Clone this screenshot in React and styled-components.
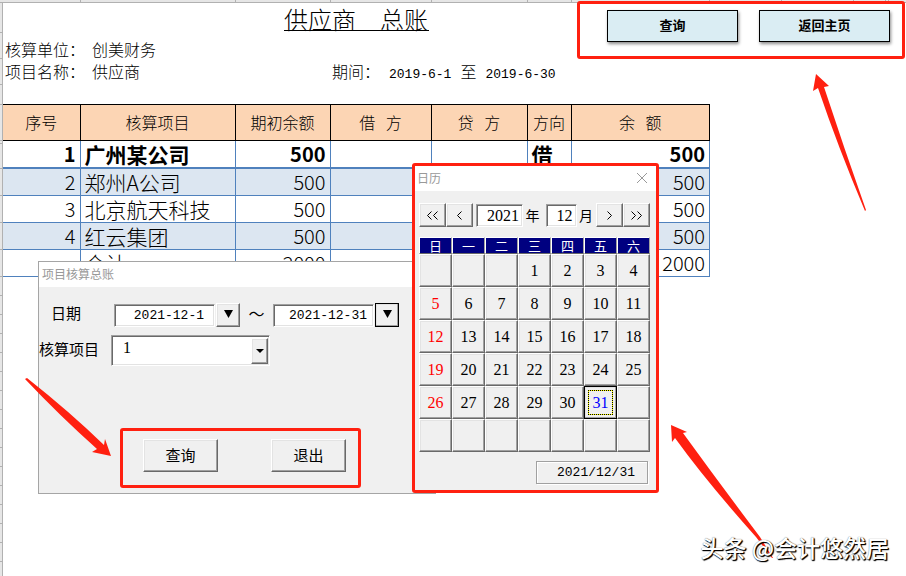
import React from "react";
import styled, { createGlobalStyle, css } from "styled-components";

const GlobalStyle = createGlobalStyle`
  * {
    box-sizing: border-box;
  }
  body {
    margin: 0;
    background: #fff;
    color: #000;
    font-family: "Noto Sans CJK SC", sans-serif;
    font-weight: 300;
  }
  button,
  input,
  select {
    margin: 0;
    color: inherit;
    font: inherit;
  }
`;

const RED = "#ff2010";
const DIGITS = `"Liberation Serif", "Noto Sans CJK SC", serif`;
const DATES = `"Liberation Mono", "Noto Sans CJK SC", monospace`;

const raised = css`
  border: 1px solid;
  border-color: #fff #696969 #696969 #fff;
  box-shadow: inset -1px -1px #a0a0a0, inset 1px 1px #e3e3e3;
  background: #f0f0f0;
`;

const sunken = css`
  border: 1px solid;
  border-color: #a0a0a0 #fff #fff #a0a0a0;
  box-shadow: inset 1px 1px #696969, inset -1px -1px #e3e3e3;
  background: #fff;
`;

const Page = styled.div`
  position: relative;
  display: grid;
  grid-template-columns: 3px minmax(0, 1fr);
  grid-template-rows: 3px auto;
  height: 100vh;
  overflow: hidden;
`;

const ColumnHeads = styled.div`
  grid-column: 1 / -1;
  display: flex;
  padding-left: 3px;
  background: #e6e6e6;
  border-bottom: 1px solid #b1b1b1;
`;

const ColumnHead = styled.span`
  width: ${({ $size }) => $size}px;
  border-right: 1px solid #b1b1b1;
`;

const RowHeads = styled.div`
  background: #e6e6e6;
  border-right: 1px solid #b1b1b1;
`;

const RowHead = styled.div`
  height: ${({ $size }) => $size}px;
  border-bottom: 1px solid #b1b1b1;
`;

const Sheet = styled.main`
  min-width: 0;
`;

const Header = styled.header`
  display: grid;
  grid-template-columns: minmax(0, 1fr) 328px;
  align-items: start;
  padding-right: 1px;
  height: 101px;
`;

const Title = styled.h1`
  width: 145px;
  height: 28px;
  margin: 0 148px 7px auto;
  border-bottom: 1px solid #000;
  font-size: 24px;
  font-weight: 300;
  line-height: 32px;
  white-space: pre;
`;

const Meta = styled.div`
  display: flex;
  padding: 0 17px 0 2px;
  font-size: 16px;
  line-height: 22px;
  white-space: pre;
`;

const MetaLabel = styled.span`
  width: 87px;
`;

const Period = styled.span`
  display: flex;
  align-items: baseline;
  gap: 9px;
  width: 228px;
  margin-left: auto;
`;

const PeriodLabel = styled.span`
  width: 48px;
`;

const PeriodDate = styled.time`
  font-family: ${DATES};
  font-size: 13px;
`;

const Frame = styled.div`
  display: flex;
  border: 3px solid ${RED};
  border-radius: 3px;
`;

const SheetActions = styled(Frame)`
  gap: 21px;
  height: 58px;
  margin-top: -2px;
  padding: 6px 12px 0 27px;
`;

const SheetButton = styled.button`
  flex: 1;
  height: 32px;
  padding: 0 0 4px;
  background: #daedf3;
  border: 1px solid #000;
  box-shadow: 1px 2px 3px rgba(0, 0, 0, 0.45);
  font-size: 13px;
  font-weight: 700;
`;

const Ledger = styled.table`
  width: calc(100% - 196px);
  table-layout: fixed;
  border-collapse: collapse;
  line-height: 26px;
  white-space: pre;

  th {
    height: 36px;
    padding: 0 0 2px;
    border: 1px solid #000;
    background: #fcd5b4;
    font-size: 16px;
    font-weight: 300;
  }
  th:first-child,
  td:first-child {
    border-left: 0;
  }
`;

const LedgerRow = styled.tr`
  background: ${({ $shaded }) => ($shaded ? "#dce6f1" : "#fff")};
  font-weight: ${({ $strong }) => ($strong ? 700 : 300)};

  td {
    border-bottom-width: ${({ $strong }) => ($strong ? 2 : 1)}px;
  }
`;

const Cell = styled.td`
  height: 27px;
  padding: 0 4px;
  border: 1px solid #4f81bd;
  text-align: ${({ $number }) => ($number ? "right" : "left")};
  font-size: ${({ $number }) => ($number ? 20 : 21)}px;
`;

const QueryWindow = styled.form`
  position: absolute;
  top: 261px;
  left: 38px;
  width: 398px;
  background: #f0f0f0;
  border: 1px solid #a5a5a5;
  font-weight: 400;
`;

const WindowTitle = styled.div`
  display: flex;
  align-items: center;
  justify-content: space-between;
  height: 25px;
  padding: 0 8px 2px 3px;
  background: #fff;
  color: #999;
  font-size: 12px;
`;

const QueryFields = styled.div`
  display: grid;
  gap: 8px;
  padding-top: 16px;
  font-size: 16px;
`;

const Field = styled.div`
  display: flex;
  align-items: center;
`;

const FieldLabel = styled.label`
  width: ${({ $size }) => $size}px;
  padding: 0 0 4px ${({ $indent }) => $indent || 0}px;
  font-size: 15px;
  line-height: 20px;
`;

const TextBox = styled.input`
  ${sunken}
  width: ${({ $size }) => $size}px;
  height: 23px;
  padding: 1px 3px 0 0;
  font-family: ${DIGITS};
  font-size: 16px;
  text-align: right;
`;

const DateBox = styled(TextBox)`
  padding-right: ${({ $pad }) => $pad}px;
  font-family: ${DATES};
  font-size: 13px;
`;

const DropButton = styled.button`
  ${raised}
  display: grid;
  place-items: center;
  width: 24px;
  height: 24px;
  margin-left: 1px;
  padding: 0 0 2px;
  ${({ $focused }) => $focused && "border-color: #000;"}
`;

const Tilde = styled.span`
  width: 33px;
  padding-bottom: 4px;
  text-align: center;
  line-height: 20px;
`;

const SelectWrap = styled.div`
  ${sunken}
  display: grid;
  grid-template-columns: minmax(0, 1fr) 17px;
  width: 159px;
  height: 31px;
  padding: 2px 1px 1px 2px;
`;

const ItemSelect = styled.select`
  grid-area: 1 / 1 / 2 / 3;
  appearance: none;
  padding: 0 0 8px 9px;
  background: transparent;
  border: 0;
  font-family: ${DIGITS};
`;

const SelectArrow = styled.span`
  ${raised}
  grid-area: 1 / 2;
  display: grid;
  place-items: center;
  pointer-events: none;
`;

const QueryActions = styled(Frame)`
  gap: 53px;
  width: 241px;
  height: 60px;
  margin: 62px 0 5px 81px;
  padding: 8px 12px 0 20px;
`;

const FormButton = styled.button`
  ${raised}
  flex: 1;
  height: 33px;
  padding: 0 0 3px;
  font-size: 15px;
`;

const CalendarWindow = styled(Frame)`
  position: absolute;
  top: 163px;
  left: 412px;
  flex-direction: column;
  width: 247px;
  background: #f0f0f0;
  font-weight: 400;
`;

const CalendarTitle = styled(WindowTitle)`
  padding-left: 2px;
`;

const CloseButton = styled.button`
  display: grid;
  padding: 0;
  background: none;
  border: 0;
`;

const CalendarBody = styled.div`
  padding: 12px 6px 6px 4px;
`;

const CalendarNav = styled.div`
  display: flex;
  align-items: center;
  margin-bottom: 10px;
  font-size: 14px;
`;

const NavButton = styled.button`
  ${raised}
  display: grid;
  place-items: center;
  width: 27px;
  height: 24px;
  padding: 0;
`;

const NavGroup = styled.label`
  display: flex;
  flex: 1 1 auto;
  align-items: center;
  justify-content: space-between;
  padding: 0 3px;
  line-height: 22px;
`;

const Days = styled.table`
  width: 100%;
  table-layout: fixed;
  border-collapse: separate;
  border-spacing: 0;
  font-family: ${DIGITS};
  font-size: 16px;

  th,
  td {
    padding: 0;
  }
`;

const Weekday = styled.th`
  height: 17px;
  background: #000080;
  border: 1px solid;
  border-color: #fff #a0a0a0 #696969 #fff;
  color: #fff;
  font-family: "Noto Sans CJK SC", sans-serif;
  font-size: 13px;
  font-weight: 400;
  line-height: 14px;
`;

const Day = styled.button`
  ${raised}
  display: grid;
  place-items: center;
  width: 100%;
  height: 33px;
  padding: ${({ $selected }) => ($selected ? 3 : 0)}px;
  color: ${({ $color }) => $color};
  ${({ $selected }) => $selected && "border-color: #000;"}
`;

const Focus = styled.span`
  display: grid;
  place-items: center;
  width: 100%;
  height: 100%;
  background: linear-gradient(#f0f0f0, #f0f0f0) padding-box,
    linear-gradient(#ffff00, #ffff00) border-box;
  border: 1px dotted #000;
`;

const Today = styled.output`
  display: block;
  width: 112px;
  height: 23px;
  margin: 9px 2px 0 auto;
  padding-right: 12px;
  border: 1px solid #a0a0a0;
  box-shadow: 1px 1px #fff, inset 1px 1px #fff;
  font-family: ${DATES};
  font-size: 13px;
  line-height: 22px;
  text-align: right;
`;

const Arrow = styled.svg`
  position: absolute;
  top: ${({ $top }) => $top}px;
  left: ${({ $left }) => $left}px;
  fill: ${RED};
  pointer-events: none;
`;

const Signature = styled.div`
  position: absolute;
  right: 17px;
  bottom: 13px;
  color: #fff;
  font-size: 23px;
  font-weight: 500;
  line-height: 32px;
  text-shadow: 1px 1px 1px #000, 1px 1px 1px #000, 0 0 1px #666;
`;

const columns = [
  { title: "序号", size: 77 },
  { title: "核算项目", size: 155 },
  { title: "期初余额", size: 95 },
  { title: "借   方", size: 101 },
  { title: "贷   方", size: 96 },
  { title: "方向", size: 44 },
  { title: "余   额" }
];

const rows = [
  ["1", "广州某公司", "500", "", "", "借", "500"],
  ["2", "郑州A公司", "500", "", "", "", "500"],
  ["3", "北京航天科技", "500", "", "", "", "500"],
  ["4", "红云集团", "500", "", "", "", "500"],
  ["", "合计", "2000", "", "", "", "2000"]
];

const columnHeads = [78, 155, 95, 101, 96, 44, 138, 72, 72, 32, 3];
const rowHeads = [30, 26, 26, 20, 36, 3, 25, 27, 27, 27, 27].concat(
  Array(16).fill(19)
);

const weekdays = ["日", "一", "二", "三", "四", "五", "六"];
const weeks = Array.from({ length: 6 }, (_, week) =>
  weekdays.map((_, i) => week * 7 + i - 2)
);

const dayColor = (day, column) => {
  if (day === 31) return "#0000ff";
  return column === 0 ? "#ff0000" : "#000";
};

const Triangle = ({ width, height }) => (
  <svg
    width={width}
    height={height}
    viewBox="0 0 10 8"
    preserveAspectRatio="none"
    aria-hidden="true"
  >
    <path d="M0 0h10L5 8z" />
  </svg>
);

const chevrons = {
  prevYear: "M5.500 1.500l-4 4 4 4M11.500 1.500l-4 4 4 4",
  prevMonth: "M8.500 1.500l-4 4 4 4",
  nextMonth: "M4.500 1.500l4 4-4 4",
  nextYear: "M1.500 1.500l4 4-4 4M7.500 1.500l4 4-4 4"
};

const Chevrons = ({ name }) => (
  <svg
    width="13"
    height="11"
    viewBox="0 0 13 11"
    fill="none"
    stroke="#000"
    aria-hidden="true"
  >
    <path d={chevrons[name]} />
  </svg>
);

const LedgerTable = () => (
  <Ledger>
    <colgroup>
      {columns.map(({ title, size }) => (
        <col key={title} width={size} />
      ))}
    </colgroup>
    <thead>
      <tr>
        {columns.map(({ title }) => (
          <th key={title} scope="col">
            {title}
          </th>
        ))}
      </tr>
    </thead>
    <tbody>
      {rows.map((row, index) => (
        <LedgerRow key={index} $strong={index === 0} $shaded={index % 2 === 1}>
          {row.map((value, i) => (
            <Cell key={i} $number={i !== 1 && i !== 5}>
              {value}
            </Cell>
          ))}
        </LedgerRow>
      ))}
    </tbody>
  </Ledger>
);

const QueryDialog = () => (
  <QueryWindow onSubmit={e => e.preventDefault()}>
    <WindowTitle>项目核算总账</WindowTitle>
    <QueryFields>
      <Field>
        <FieldLabel htmlFor="from" $size={75} $indent={12}>
          日期
        </FieldLabel>
        <DateBox id="from" $size={101} $pad={10} defaultValue="2021-12-1" />
        <DropButton type="button" aria-label="选择开始日期">
          <Triangle width="9" height="8" />
        </DropButton>
        <Tilde>～</Tilde>
        <DateBox
          aria-label="结束日期"
          $size={101}
          $pad={6}
          defaultValue="2021-12-31"
        />
        <DropButton type="button" aria-label="选择结束日期" $focused>
          <Triangle width="9" height="8" />
        </DropButton>
      </Field>
      <Field>
        <FieldLabel htmlFor="item" $size={72}>
          核算项目
        </FieldLabel>
        <SelectWrap>
          <ItemSelect id="item" defaultValue="1">
            <option value="1">1</option>
          </ItemSelect>
          <SelectArrow>
            <Triangle width="8" height="4" />
          </SelectArrow>
        </SelectWrap>
      </Field>
    </QueryFields>
    <QueryActions>
      <FormButton type="submit">查询</FormButton>
      <FormButton type="button">退出</FormButton>
    </QueryActions>
  </QueryWindow>
);

const Calendar = () => (
  <CalendarWindow>
    <CalendarTitle>
      日历
      <CloseButton aria-label="关闭">
        <svg width="12" height="12" viewBox="0 0 12 12" stroke="#999">
          <path d="M1 1l10 10M11 1L1 11" />
        </svg>
      </CloseButton>
    </CalendarTitle>
    <CalendarBody>
      <CalendarNav>
        <NavButton aria-label="上一年">
          <Chevrons name="prevYear" />
        </NavButton>
        <NavButton aria-label="上一月">
          <Chevrons name="prevMonth" />
        </NavButton>
        <NavGroup>
          <TextBox $size={47} defaultValue="2021" />年
        </NavGroup>
        <NavGroup>
          <TextBox $size={31} defaultValue="12" />月
        </NavGroup>
        <NavButton aria-label="下一月">
          <Chevrons name="nextMonth" />
        </NavButton>
        <NavButton aria-label="下一年">
          <Chevrons name="nextYear" />
        </NavButton>
      </CalendarNav>
      <Days>
        <thead>
          <tr>
            {weekdays.map(name => (
              <Weekday key={name} scope="col">
                {name}
              </Weekday>
            ))}
          </tr>
        </thead>
        <tbody>
          {weeks.map((week, index) => (
            <tr key={index}>
              {week.map((day, i) => {
                const selected = day === 31;
                const label = day > 0 && day < 32 ? day : "";
                return (
                  <td key={day}>
                    <Day $selected={selected} $color={dayColor(day, i)}>
                      {selected ? <Focus>{label}</Focus> : label}
                    </Day>
                  </td>
                );
              })}
            </tr>
          ))}
        </tbody>
      </Days>
      <Today>2021/12/31</Today>
    </CalendarBody>
  </CalendarWindow>
);

const App = () => (
  <>
    <GlobalStyle />
    <Page>
      <ColumnHeads>
        {columnHeads.map((size, i) => (
          <ColumnHead key={i} $size={size} />
        ))}
      </ColumnHeads>
      <RowHeads>
        {rowHeads.map((size, i) => (
          <RowHead key={i} $size={size} />
        ))}
      </RowHeads>
      <Sheet>
        <Header>
          <div>
            <Title>供应商　总账</Title>
            <Meta>
              <MetaLabel>核算单位：</MetaLabel>
              <span>创美财务</span>
            </Meta>
            <Meta>
              <MetaLabel>项目名称：</MetaLabel>
              <span>供应商</span>
              <Period>
                <PeriodLabel>期间：</PeriodLabel>
                <PeriodDate>2019-6-1</PeriodDate>
                <span>至</span>
                <PeriodDate>2019-6-30</PeriodDate>
              </Period>
            </Meta>
          </div>
          <SheetActions>
            <SheetButton>查询</SheetButton>
            <SheetButton>返回主页</SheetButton>
          </SheetActions>
        </Header>
        <LedgerTable />
      </Sheet>
      <QueryDialog />
      <Calendar />
      <Arrow $top={73} $left={812} width="56" height="140">
        <path d="M4 1L17 13 12 14Q32 75 54 137L53 138Q26 74 6 15L1 18z" />
      </Arrow>
      <Arrow $top={424} $left={670} width="104" height="136">
        <path d="M1 1L17 8 13 9Q50 60 90 113L103 134 102 134 86 113Q36 57 5 14L2 18z" />
      </Arrow>
      <Arrow $top={377} $left={25} width="88" height="82">
        <path d="M0 2L2 1Q45 35 79 68L80 62 86 79 67 75 72 72Q35 39 0 2z" />
      </Arrow>
      <Signature>头条 @会计悠然居</Signature>
    </Page>
  </>
);

export default App;
